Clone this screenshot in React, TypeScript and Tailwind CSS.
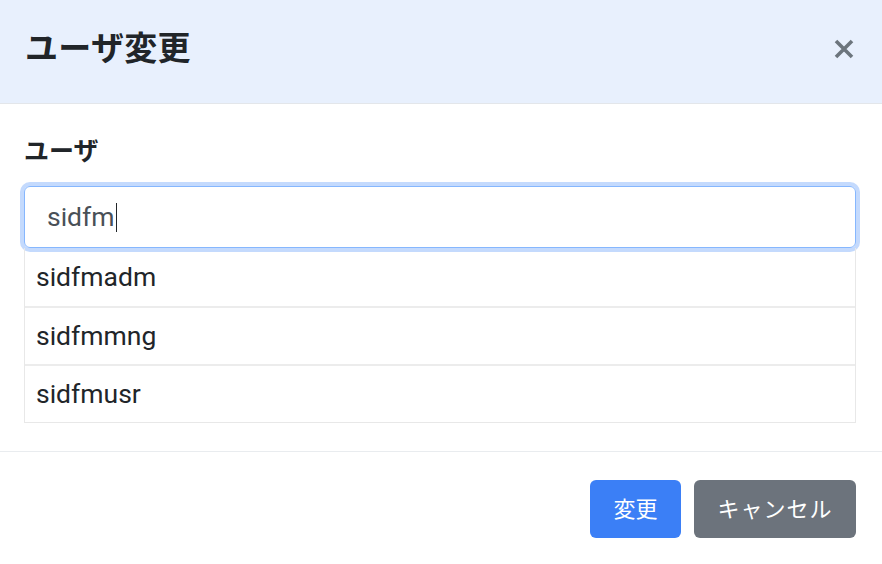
const users = ['sidfmadm', 'sidfmmng', 'sidfmusr'];

const font = { fontFamily: 'Roboto, "Noto Sans CJK JP", sans-serif' };

export default function App() {
  return (
    <div className="w-[882px] h-[564px] bg-white text-[#212529] overflow-hidden" style={font}>
      {/* header */}
      <div className="h-[104px] bg-[#e8f0fd] border-b border-[#e3e6ea] flex items-center justify-between pl-[25px] pr-[28px] pb-[6px]">
        <h5 className="text-[33px] font-bold leading-none tracking-[0.3px]">ユーザ変更</h5>
        <button className="text-[#6c757d] mt-[1px]">
          <svg width="20" height="20" viewBox="0 0 20 20">
            <path d="M2 2 L18 18 M18 2 L2 18" stroke="currentColor" strokeWidth="3.6" />
          </svg>
        </button>
      </div>

      {/* body */}
      <div className="pl-[24px] pr-[26px] pt-[30px] pb-[28px] border-b border-[#e9ecef]">
        <label className="block text-[25px] font-bold leading-[36px] mb-[16px]">ユーザ</label>
        <div className="h-[62px] border border-[#86b7fe] rounded-[6px] ring-4 ring-[#c4dafd] flex items-center pl-[22px] text-[26.5px] text-[#495057]">
          <span>sidfm</span>
          <span className="w-[1.5px] h-[29px] bg-[#212529] ml-[1px]"></span>
        </div>
        <div className="border border-t-0 border-[#e8e8e8]">
          {users.map((u, i) => (
            <div
              key={u}
              className={
                'h-[58px] flex items-center pl-[11px] text-[26.5px] text-[#212529] ' +
                (i > 0 ? 'border-t-2 border-[#ececec]' : '')
              }
            >
              {u}
            </div>
          ))}
        </div>
      </div>

      {/* footer */}
      <div className="flex justify-end gap-[13px] pr-[26px] pt-[28px]">
        <button className="w-[91px] h-[58px] rounded-[6px] bg-[#3b7ff6] text-white text-[22px]">変更</button>
        <button className="w-[162px] h-[58px] rounded-[6px] bg-[#6c737c] text-white text-[22px] tracking-[1px]">キャンセル</button>
      </div>
    </div>
  );
}
